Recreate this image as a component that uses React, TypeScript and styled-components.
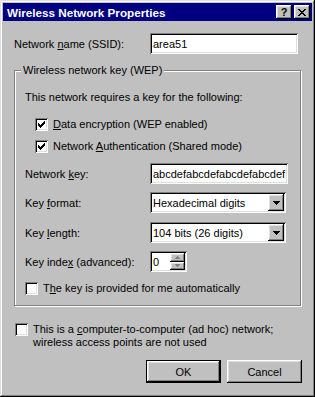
import styled, { createGlobalStyle } from "styled-components";

const GlobalStyle = createGlobalStyle`
  html, body {
    margin: 0;
    padding: 0;
  }
  body {
    background: #c0c0c0;
    font-family: "Liberation Sans", Arial, sans-serif;
    font-size: 11px;
    color: #000;
  }
`;

const raised = `
  box-shadow: inset -1px -1px #000, inset 1px 1px #fff,
    inset -2px -2px #808080, inset 2px 2px #dfdfdf;
`;

const sunken = `
  box-shadow: inset 1px 1px #808080, inset -1px -1px #fff,
    inset 2px 2px #000, inset -2px -2px #dfdfdf;
`;

const Window = styled.div`
  box-sizing: border-box;
  width: 315px;
  height: 397px;
  padding: 3px;
  display: flex;
  flex-direction: column;
  background: #c0c0c0;
  box-shadow: inset -1px -1px #000, inset 1px 1px #dfdfdf,
    inset -2px -2px #808080, inset 2px 2px #fff;
`;

const TitleBar = styled.div`
  height: 18px;
  flex: none;
  display: flex;
  align-items: center;
  justify-content: space-between;
  padding: 0 2px 0 4px;
  background: #000080;
  color: #fff;
  font-weight: bold;
  font-size: 11.7px;
`;

const TitleButtons = styled.div`
  display: flex;
  gap: 2px;
`;

const TitleButton = styled.div`
  width: 16px;
  height: 14px;
  display: flex;
  align-items: center;
  justify-content: center;
  background: #c0c0c0;
  color: #000;
  font-size: 11px;
  font-weight: bold;
  line-height: 1;
  ${raised}
`;

const Content = styled.div`
  flex: 1;
  display: flex;
  flex-direction: column;
  padding: 12px 11px 0 11px;
`;

const FieldRow = styled.div<{ $top?: number }>`
  display: flex;
  align-items: center;
  height: 21px;
  margin-top: ${(p) => p.$top ?? 0}px;
`;

const Label = styled.div<{ $width: number }>`
  width: ${(p) => p.$width}px;
  flex: none;
  white-space: nowrap;
`;

const TextBox = styled.div<{ $width: number }>`
  box-sizing: border-box;
  width: ${(p) => p.$width}px;
  height: 21px;
  padding: 0 3px;
  display: flex;
  align-items: center;
  overflow: hidden;
  white-space: nowrap;
  background: #fff;
  ${sunken}
`;

const Group = styled.div`
  position: relative;
  margin-top: 16px;
  padding: 20px 10px 10px 10px;
  border: 1px solid #808080;
  box-shadow: inset 1px 1px #fff, 1px 1px #fff;
`;

const GroupTitle = styled.div`
  position: absolute;
  top: -7px;
  left: 6px;
  padding: 0 2px;
  line-height: 13px;
  background: #c0c0c0;
`;

const Text = styled.div`
  line-height: 13px;
`;

const CheckRow = styled.div<{ $top?: number; $indent?: number }>`
  display: flex;
  align-items: flex-start;
  gap: 5px;
  line-height: 13px;
  margin-top: ${(p) => p.$top ?? 0}px;
  margin-left: ${(p) => p.$indent ?? 0}px;
`;

const CheckBox = styled.div`
  flex: none;
  width: 13px;
  height: 13px;
  display: flex;
  align-items: center;
  justify-content: center;
  background: #fff;
  ${sunken}
`;

const SelectBox = styled.div`
  box-sizing: border-box;
  width: 136px;
  height: 21px;
  padding: 2px;
  display: flex;
  align-items: center;
  background: #fff;
  ${sunken}
`;

const SelectText = styled.div`
  flex: 1;
  padding-left: 1px;
  white-space: nowrap;
`;

const DropButton = styled.div`
  width: 16px;
  height: 17px;
  display: flex;
  align-items: center;
  justify-content: center;
  background: #c0c0c0;
  ${raised}
`;

const SpinBox = styled.div`
  box-sizing: border-box;
  width: 37px;
  height: 21px;
  padding: 2px;
  display: flex;
  background: #fff;
  ${sunken}
`;

const SpinText = styled.div`
  flex: 1;
  padding-left: 1px;
  display: flex;
  align-items: center;
`;

const SpinButtons = styled.div`
  width: 15px;
  display: flex;
  flex-direction: column;
`;

const SpinButton = styled.div`
  flex: 1;
  display: flex;
  align-items: center;
  justify-content: center;
  background: #c0c0c0;
  ${raised}
`;

const ButtonRow = styled.div`
  display: flex;
  justify-content: flex-end;
  gap: 6px;
  margin-top: 11px;
  margin-right: -1px;
`;

const Button = styled.div<{ $default?: boolean }>`
  width: 75px;
  height: 23px;
  display: flex;
  align-items: center;
  justify-content: center;
  background: #c0c0c0;
  ${(p) =>
    p.$default
      ? `box-shadow: inset 0 0 0 1px #000, inset -2px -2px #000, inset 2px 2px #fff,
          inset -3px -3px #808080, inset 3px 3px #dfdfdf;`
      : raised}
`;

function Check() {
  return (
    <svg width="7" height="7" viewBox="0 0 7 7" shapeRendering="crispEdges">
      <path
        fill="#000"
        d="M6 0h1v3h-1zM5 1h1v3h-1zM4 2h1v3h-1zM3 3h1v3h-1zM2 4h1v3h-1zM1 3h1v3h-1zM0 2h1v3h-1z"
      />
    </svg>
  );
}

function CloseGlyph() {
  return (
    <svg width="8" height="7" viewBox="0 0 8 7" shapeRendering="crispEdges">
      <path
        fill="#000"
        d="M0 0h2v1h-2zM6 0h2v1h-2zM1 1h2v1h-2zM5 1h2v1h-2zM2 2h4v1h-4zM3 3h2v1h-2zM2 4h4v1h-4zM1 5h2v1h-2zM5 5h2v1h-2zM0 6h2v1h-2zM6 6h2v1h-2z"
      />
    </svg>
  );
}

function DownArrow({ color = "#000" }: { color?: string }) {
  return (
    <svg width="7" height="4" viewBox="0 0 7 4" shapeRendering="crispEdges">
      <path fill={color} d="M0 0h7v1h-7zM1 1h5v1h-5zM2 2h3v1h-3zM3 3h1v1h-1z" />
    </svg>
  );
}

function SpinArrow({ up }: { up?: boolean }) {
  return (
    <svg
      width="5"
      height="3"
      viewBox="0 0 5 3"
      shapeRendering="crispEdges"
      style={up ? undefined : { transform: "rotate(180deg)" }}
    >
      <path fill="#808080" d="M2 0h1v1h-1zM1 1h3v1h-3zM0 2h5v1h-5z" />
    </svg>
  );
}

export default function App() {
  return (
    <>
      <GlobalStyle />
      <Window>
        <TitleBar>
          <span>Wireless Network Properties</span>
          <TitleButtons>
            <TitleButton>?</TitleButton>
            <TitleButton>
              <CloseGlyph />
            </TitleButton>
          </TitleButtons>
        </TitleBar>
        <Content>
          <FieldRow>
            <Label $width={136}>
              Network <u>n</u>ame (SSID):
            </Label>
            <TextBox $width={148}>area51</TextBox>
          </FieldRow>

          <Group>
            <GroupTitle>Wireless network key (WEP)</GroupTitle>
            <Text>This network requires a key for the following:</Text>
            <CheckRow $top={14} $indent={10}>
              <CheckBox>
                <Check />
              </CheckBox>
              <span>
                <u>D</u>ata encryption (WEP enabled)
              </span>
            </CheckRow>
            <CheckRow $top={9} $indent={10}>
              <CheckBox>
                <Check />
              </CheckBox>
              <span>
                Network <u>A</u>uthentication (Shared mode)
              </span>
            </CheckRow>

            <FieldRow $top={10}>
              <Label $width={125}>
                Network <u>k</u>ey:
              </Label>
              <TextBox $width={138}>abcdefabcdefabcdefabcdef</TextBox>
            </FieldRow>
            <FieldRow $top={8}>
              <Label $width={125}>
                Key <u>f</u>ormat:
              </Label>
              <SelectBox>
                <SelectText>Hexadecimal digits</SelectText>
                <DropButton>
                  <DownArrow />
                </DropButton>
              </SelectBox>
            </FieldRow>
            <FieldRow $top={9}>
              <Label $width={125}>
                Key <u>l</u>ength:
              </Label>
              <SelectBox>
                <SelectText>104 bits (26 digits)</SelectText>
                <DropButton>
                  <DownArrow />
                </DropButton>
              </SelectBox>
            </FieldRow>
            <FieldRow $top={8}>
              <Label $width={125}>
                Key inde<u>x</u> (advanced):
              </Label>
              <SpinBox>
                <SpinText>0</SpinText>
                <SpinButtons>
                  <SpinButton>
                    <SpinArrow up />
                  </SpinButton>
                  <SpinButton>
                    <SpinArrow />
                  </SpinButton>
                </SpinButtons>
              </SpinBox>
            </FieldRow>
            <CheckRow $top={10}>
              <CheckBox />
              <span>
                T<u>h</u>e key is provided for me automatically
              </span>
            </CheckRow>
          </Group>

          <CheckRow $top={17} $indent={1}>
            <CheckBox />
            <span>
              This is a <u>c</u>omputer-to-computer (ad hoc) network;
              <br />
              wireless access points are not used
            </span>
          </CheckRow>

          <ButtonRow>
            <Button $default>OK</Button>
            <Button>Cancel</Button>
          </ButtonRow>
        </Content>
      </Window>
    </>
  );
}
